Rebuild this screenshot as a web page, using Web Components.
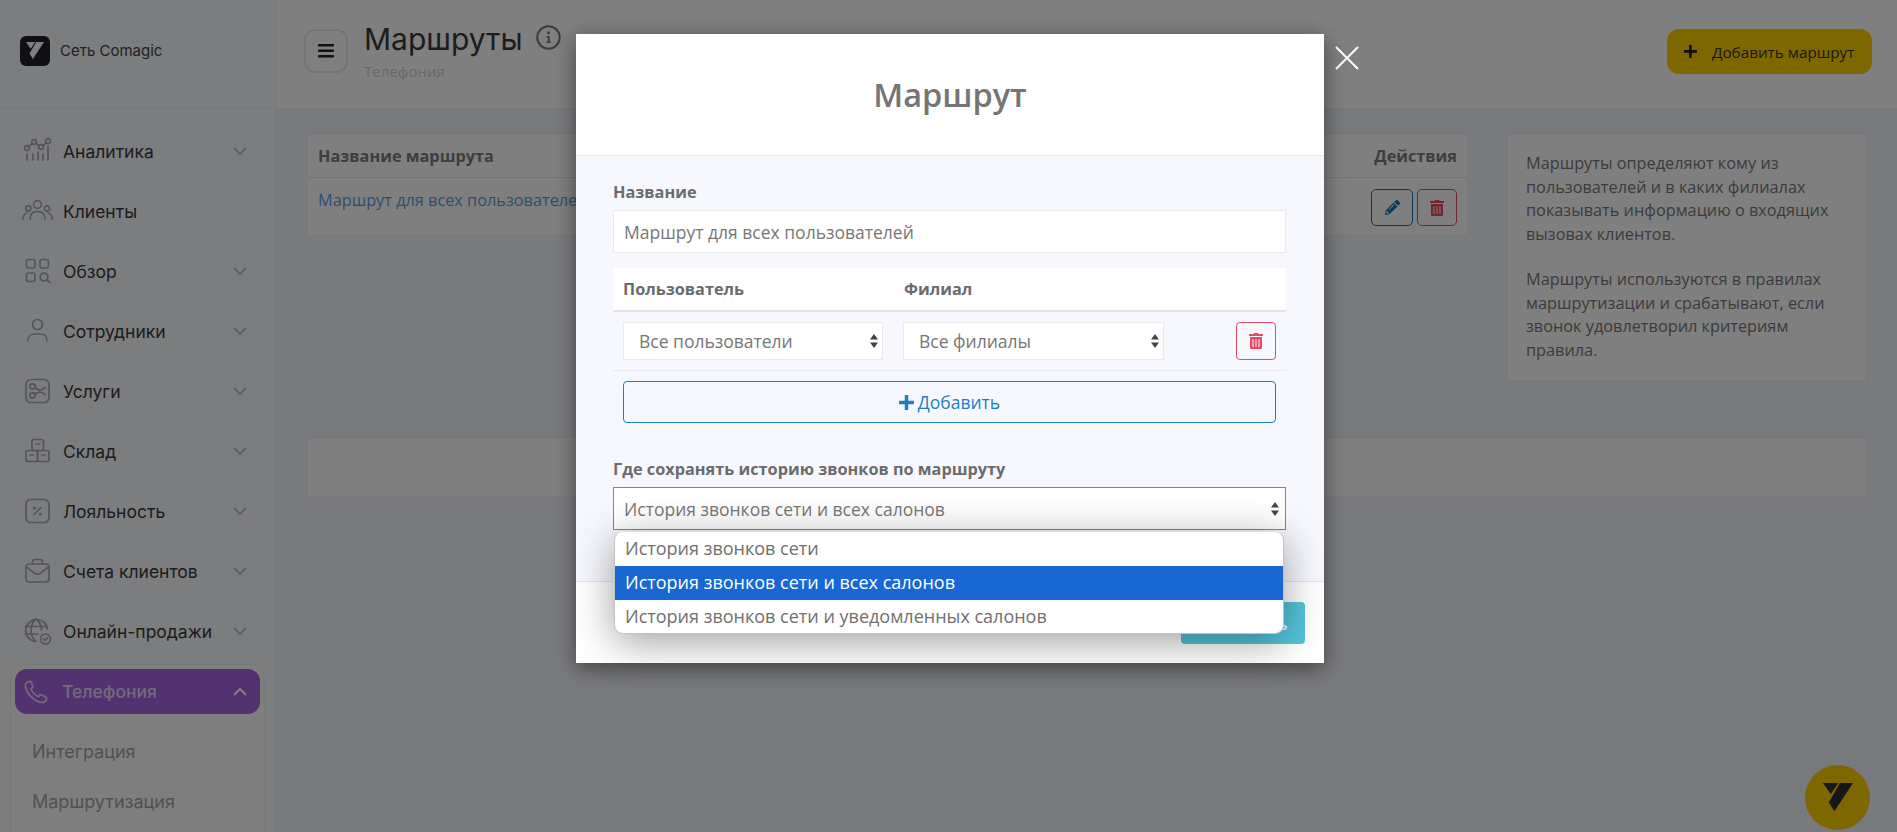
<!DOCTYPE html>
<html lang="ru"><head><meta charset="utf-8"><title>Маршруты</title>
<style>
html,body{margin:0;height:832px;overflow:hidden;background:#f3f5fb}
body{font-family:"Open Sans",sans-serif;color:#666}
</style></head><body>
<app-shell></app-shell>
<script>
const T={
 trash:c=>`<svg width="14" height="16" viewBox="0 0 448 512" fill="${c}"><path d="M32 464a48 48 0 0 0 48 48h288a48 48 0 0 0 48-48V128H32zm272-256a16 16 0 0 1 32 0v224a16 16 0 0 1-32 0zm-96 0a16 16 0 0 1 32 0v224a16 16 0 0 1-32 0zm-96 0a16 16 0 0 1 32 0v224a16 16 0 0 1-32 0zM432 32H312l-9.4-18.7A24 24 0 0 0 281.1 0H166.8a23.72 23.72 0 0 0-21.4 13.3L136 32H16A16 16 0 0 0 0 48v32a16 16 0 0 0 16 16h416a16 16 0 0 0 16-16V48a16 16 0 0 0-16-16z"/></svg>`,
 pencil:c=>`<svg width="15" height="15" viewBox="0 0 512 512" fill="${c}"><path d="M497.9 142.1l-46.1 46.1c-4.7 4.7-12.3 4.7-17 0l-111-111c-4.7-4.7-4.7-12.3 0-17l46.1-46.1c18.7-18.7 49.1-18.7 67.9 0l60.1 60.1c18.8 18.7 18.8 49.1 0 67.9zM284.2 99.8L21.6 362.4.4 483.9c-2.9 16.4 11.4 30.6 27.8 27.8l121.5-21.3 262.6-262.6c4.7-4.7 4.7-12.3 0-17l-111-111c-4.8-4.7-12.4-4.7-17.1 0zM124.1 339.9c-5.5-5.5-5.5-14.3 0-19.8l154-154c5.5-5.5 14.3-5.5 19.8 0s5.5 14.3 0 19.8l-154 154c-5.5 5.5-14.3 5.5-19.8 0zM88 424h48v36.3l-64.5 11.3-31.1-31.1L51.7 376H88v48z"/></svg>`,
 logo:(w,c)=>`<svg width="${w}" viewBox="0 0 92 87" fill="${c}" style="display:block"><path d="M0 0H47L24 34ZM92 0 35 87 18 59 52 0Z"/></svg>`
};
const NAV={
 a:`<circle cx="6" cy="12" r="2.4"/><circle cx="13" cy="6" r="2.4"/><circle cx="20" cy="11" r="2.4"/><circle cx="27" cy="5" r="2.4"/><path d="M7.800 10.500 11.200 7.500M15 7 18 9.800M22 9.700 25.200 6.500M6 18V24M12 18V24M17 16V24M22 18V24M27 10V24"/>`,
 c:`<circle cx="16.500" cy="8.500" r="3.800"/><circle cx="7.300" cy="12.500" r="2.600"/><circle cx="26" cy="12.500" r="2.600"/><path d="M9 23C9 18 12 15.500 16.500 15.500S24 18 24 23M2 23C2 19.500 3.500 17.500 6 17M31 23C31 19.500 29.500 17.500 27 17"/>`,
 o:`<rect x="5.500" y="3.500" width="8.500" height="8.500" rx="2.200"/><rect x="19" y="3.500" width="8.500" height="8.500" rx="2.200"/><rect x="5.500" y="17" width="8.500" height="8.500" rx="2.200"/><circle cx="23" cy="21" r="3.900"/><path d="M26 24 29 26.500"/>`,
 e:`<circle cx="16.500" cy="8.500" r="5"/><path d="M7 24.500C7 20 10 18 13 18H20C23 18 26 20 26 24.500"/>`,
 s:`<rect x="5" y="3.500" width="23" height="23" rx="5"/><circle cx="11.500" cy="10.500" r="2.600"/><circle cx="11.500" cy="19.500" r="2.600"/><path d="M14 11.500 24 18.500M14 18.500 24 11.500"/>`,
 w:`<rect x="11" y="3.500" width="11.500" height="11" rx="2"/><rect x="5" y="14.500" width="11.500" height="11" rx="2"/><rect x="16.500" y="14.500" width="11.500" height="11" rx="2"/><path d="M15 8H18.500M9 19H12.500M20.500 19H24"/>`,
 l:`<rect x="5" y="3.500" width="23" height="23" rx="5"/><path d="M20 11.500 13 18.500"/><circle cx="13.500" cy="12" r=".7"/><circle cx="19.500" cy="18" r=".7"/>`,
 b:`<rect x="5" y="8" width="23" height="18" rx="3"/><path d="M11.500 8V6C11.500 4.500 12.500 3.500 14 3.500H19C20.500 3.500 21.500 4.500 21.500 6V8M5.500 11 14 17.500C15.500 18.500 17.500 18.500 19 17.500L27.500 11"/>`,
 g:`<path d="M15 25.500A11 11 0 1 1 26.500 13M4.500 10.500H25.500M4.500 18H17M15 3C11 6 10 10.500 10 14.500S11.500 22.500 15 25.500M15 3C19 6 20.500 10.500 20.500 14"/><circle cx="24.500" cy="23" r="5"/><path d="M22.500 23 24 24.500 26.500 21.800"/>`,
 p:`<path d="M9 4.500C6.500 5 5 7 5.500 9.500 7 17 13 23.500 21 25.500 23.500 26 25.500 24.500 26.500 22.500 27 21.500 26.500 20.500 25.500 20L22 18C21 17.500 20 17.800 19.300 18.700L18.500 19.700C15 18 12.500 15.500 11 12L12 11C12.800 10.300 13 9.300 12.600 8.300L11.200 5.300C10.800 4.500 10 4.300 9 4.500Z"/>`
};
function def(name,html){customElements.define(name,class extends HTMLElement{
  constructor(){super();this.attachShadow({mode:'open'})}
  connectedCallback(){this.shadowRoot.innerHTML=typeof html==='function'?html(this):html}
})}

def('nav-item',h=>{const act=h.hasAttribute('active'),ch=h.hasAttribute('nochev')?'':`<svg class="chev" width="14" height="8" viewBox="0 0 14 8" fill="none" stroke="${act?'#fff':'#aeb0b5'}" stroke-width="${act?2:1.600}"><path d="M1 ${act?7:1} 7 ${act?1:7} 13 ${act?7:1}"/></svg>`;
 return `<style>
 :host{display:flex;flex:none;align-items:center;height:${act?'45px':'60px'};font:17.500px Inter,sans-serif;color:#38383c;padding-left:${act?'5px':'21px'};${act?'background:#a465de;border-radius:12px;color:#fff;':''}}
 .ic{width:30px;height:30px;flex:none;overflow:visible;fill:none;stroke:${act?'#fff':'#a8aaae'};stroke-width:1.700;stroke-linecap:round;stroke-linejoin:round;opacity:${act?'.75':'1'}}
 span{margin-left:12px;white-space:nowrap;${act?'opacity:.72;font-weight:500;':''}}
 .chev{margin-left:auto;margin-right:${act?'13px':'28px'};flex:none}
 </style><svg class="ic" viewBox="0 0 30 30">${NAV[h.getAttribute('icon')]}</svg><span><slot></slot></span>${ch}`});

def('sub-item',`<style>:host{display:flex;flex:none;align-items:center;height:50px;padding-left:17px;font:18px Inter,sans-serif;color:#a2a3a9}</style><slot></slot>`);

def('side-bar',`<style>
 :host{display:flex;flex-direction:column;width:275px;flex:none;height:832px;background:#f9fbff;border-right:1px solid #f0f0f2;overflow:hidden;box-sizing:content-box}
 .brand{height:108px;flex:none;border-bottom:1px solid #f0f1f4;display:flex;align-items:center;padding:0 0 6px 20px;gap:10px;font:15px Inter,sans-serif;color:#444;box-sizing:border-box}
 .brand div{width:30px;height:30px;border-radius:6px;background:#1c2026;display:flex;align-items:center;justify-content:center}
 nav{padding-top:13px;display:flex;flex-direction:column}
 .open{margin:3px 10px 0;padding:4px 4px 0;border:1px solid #f0f1f4;border-radius:14px;background:#fdfdfe;display:flex;flex-direction:column;box-sizing:border-box;height:200px}
 .subs{padding-top:12px;display:flex;flex-direction:column}
 </style>
 <div class="brand"><div>${T.logo(18,'#fff')}</div>Сеть Comagic</div>
 <nav>
  <nav-item icon="a">Аналитика</nav-item>
  <nav-item icon="c" nochev>Клиенты</nav-item>
  <nav-item icon="o">Обзор</nav-item>
  <nav-item icon="e">Сотрудники</nav-item>
  <nav-item icon="s">Услуги</nav-item>
  <nav-item icon="w">Склад</nav-item>
  <nav-item icon="l">Лояльность</nav-item>
  <nav-item icon="b">Счета клиентов</nav-item>
  <nav-item icon="g">Онлайн-продажи</nav-item>
  <div class="open">
   <nav-item icon="p" active>Телефония</nav-item>
   <div class="subs"><sub-item>Интеграция</sub-item><sub-item>Маршрутизация</sub-item></div>
  </div>
 </nav>`);

def('page-header',`<style>
 :host{display:flex;align-items:flex-start;height:109px;flex:none;background:#fff;border-bottom:1px solid #f0f1f4;padding:29px 25px 0 28px;box-sizing:border-box}
 .menu{width:44px;height:44px;box-sizing:border-box;border:2px solid #e8e9ee;border-radius:11px;display:flex;align-items:center;justify-content:center;flex:none}
 .t{margin-left:16px}
 h1{margin:-10px 0 0;font:400 30px/40px Inter,sans-serif;color:#38383c;display:flex;align-items:center}
 h1 svg{margin:-4px 0 0 13px}
 small{display:block;font:15px/16px "Open Sans",sans-serif;color:#cfd0d4;margin-top:4px}
 .add{margin-left:auto;width:205px;height:45px;border-radius:12px;background:#ffce00;display:flex;align-items:center;padding-left:17px;box-sizing:border-box;font:15.250px "Open Sans",sans-serif;color:#333;gap:15px}
 </style>
 <div class="menu"><svg width="16" height="14" viewBox="0 0 16 14" fill="#222"><rect width="16" height="2.600" rx=".8"/><rect y="5.500" width="16" height="2.600" rx=".8"/><rect y="11" width="16" height="2.600" rx=".8"/></svg></div>
 <div class="t"><h1>Маршруты<svg width="25" height="25" viewBox="0 0 25 25"><circle cx="12.500" cy="12.500" r="11.200" fill="none" stroke="#777" stroke-width="2"/><circle cx="12.500" cy="7.800" r="1.500" fill="#777"/><path d="M10.500 11H13.700V16.500H15V18H10.500V16.500H11.800V12.500H10.500Z" fill="#777"/></svg></h1><small>Телефония</small></div>
 <div class="add"><svg width="13" height="13" viewBox="0 0 13 13" fill="#222"><rect y="5" width="13" height="2.800"/><rect x="5" width="2.800" height="13"/></svg><span>Добавить маршрут</span></div>`);

def('action-btn',h=>`<style>:host{display:flex;align-items:center;justify-content:center;box-sizing:border-box;height:37px;width:${h.getAttribute('w')}px;border:1px solid ${h.getAttribute('c')};border-radius:5px}</style>${h.getAttribute('i')==='pencil'?T.pencil(h.getAttribute('c')):T.trash(h.getAttribute('c'))}`);

def('routes-table',`<style>
 :host{display:block;background:#fff;border:1px solid #eeeff2;box-sizing:border-box;height:103px;font-size:16.300px}
 .h{height:43px;display:flex;align-items:center;justify-content:space-between;padding:0 10px;border-bottom:1px solid #e6e7ea;font-weight:700;color:#7c7c7c}
 .r{display:flex;justify-content:space-between;padding:11px 10px 0;color:#5a9ce6}
 .b{display:flex;gap:4px}
 a{line-height:24px;margin-top:-1px}
 </style>
 <div class="h"><span>Название маршрута</span><span>Действия</span></div>
 <div class="r"><a>Маршрут для всех пользователей</a><div class="b"><action-btn w="42" c="#1272b8" i="pencil"></action-btn><action-btn w="40" c="#e84a5f" i="trash"></action-btn></div></div>`);

def('info-card',`<style>
 :host{display:block;background:#fff;border:1px solid #f0f1f4;box-sizing:border-box;height:248px;padding:18px 18px 0;font-size:16.300px;line-height:23.500px;color:#777}
 p{margin:0}p+p{margin-top:22px}
 </style><p>Маршруты определяют кому из пользователей и в каких филиалах показывать информацию о входящих вызовах клиентов.</p><p>Маршруты используются в правилах маршрутизации и срабатывают, если звонок удовлетворил критериям правила.</p>`);

def('page-content',`<style>
 :host{display:grid;grid-template-columns:1161px 360px;column-gap:39px;padding:24px 30px 0 31px;align-items:start;flex:1;grid-template-rows:248px auto;align-content:start;background:#f3f5fb}
 .wide{grid-column:1/3;height:61px;background:#fff;border:1px solid #f0f1f4;border-radius:3px;margin-top:56px;box-sizing:border-box}
 </style><routes-table></routes-table><info-card></info-card><div class="wide"></div>`);

def('fake-select',h=>`<style>
 :host{display:flex;align-items:center;box-sizing:border-box;background:#fff;border:1px solid ${h.hasAttribute('focus')?'#2fae94':'#e9eaee'};height:${h.getAttribute('h')||38}px;padding-left:${h.getAttribute('p')||12}px;padding-right:${h.getAttribute('r')||4}px;font-size:17.500px;color:#777;white-space:nowrap}
 svg{margin-left:auto}
 </style><span><slot></slot></span><svg width="8" height="14" viewBox="0 0 8 14" fill="#444"><path d="M4 0 8 5.500H0ZM4 14 0 8.500H8Z"/></svg>`);

def('select-menu',`<style>
 :host{position:absolute;left:38px;top:497px;width:670px;height:103px;background:#fff;border:1px solid #c4c4c4;border-top-color:#ddd;border-radius:9px;overflow:hidden;box-sizing:border-box;box-shadow:0 8px 40px rgba(0,0,0,.38);font-size:18px;color:#707070;z-index:3}
 div{height:34px;line-height:33px;padding-left:10px;white-space:nowrap}
 .s{background:#1967d2;color:#fff}
 </style><div>История звонков сети</div><div class="s">История звонков сети и всех салонов</div><div>История звонков сети и уведомленных салонов</div>`);

def('route-modal',`<style>
 :host{position:absolute;left:576px;top:34px;width:748px;height:629px;background:#fff;box-shadow:0 5px 20px rgba(0,0,0,.45);display:flex;flex-direction:column;font-family:"Open Sans",sans-serif}
 header{height:122px;flex:none;box-sizing:border-box;border-bottom:1px solid #e5e7ec;display:flex;align-items:center;justify-content:center;font-size:32.500px;font-weight:600;color:#757575}
 main{height:426px;flex:none;box-sizing:border-box;background:#f7f8fd;padding:26px 38px 0 37px;border-bottom:1px solid #e5e7ec}
 label{display:block;font-size:16.300px;font-weight:700;line-height:20px;color:#6b6b6b}
 .inp{margin-top:8px;height:43px;box-sizing:border-box;background:#fff;border:1px solid #e9eaee;font-size:17.500px;line-height:42px;padding-left:10px;color:#777}
 .th{margin-top:15px;height:44px;box-sizing:border-box;background:#fff;border-bottom:2px solid #e2e3e9;display:grid;grid-template-columns:281px 1fr;padding-left:10px;font-size:16.300px;font-weight:700;line-height:42px;color:#6b6b6b}
 .tr{height:59px;box-sizing:border-box;border-bottom:1px solid #e8e9ee;display:grid;grid-template-columns:260px 261px 40px;column-gap:20px;padding:10px 10px 0;align-content:start}
 .tr .x{height:38px;box-sizing:border-box;margin-left:52px;width:40px;border:1px solid #e84a5f;border-radius:4px;display:flex;align-items:center;justify-content:center}
 .add{margin:10px 10px 0;height:42px;box-sizing:border-box;border:1px solid #1b7fc4;border-radius:4px;display:flex;align-items:center;justify-content:center;gap:4px;color:#1b7fc4;font-size:17.500px}
 .l2{margin-top:36px}
 .sel{margin-top:8px}
 footer{flex:1;position:relative}
 .save{position:absolute;left:605px;top:20px;width:124px;height:42px;border-radius:4px;background:#56c5dc;color:#fff;font-size:17px;display:flex;align-items:center;justify-content:center}
 </style>
 <header>Маршрут</header>
 <main>
  <label>Название</label>
  <div class="inp">Маршрут для всех пользователей</div>
  <div class="th"><span>Пользователь</span><span>Филиал</span></div>
  <div class="tr"><fake-select p="15" r="4">Все пользователи</fake-select><fake-select p="15" r="4">Все филиалы</fake-select><div class="x">${T.trash('#e84a5f')}</div></div>
  <div class="add"><svg width="15" height="15" viewBox="0 0 15 15" fill="#1b7fc4"><rect y="5.800" width="15" height="3.400" rx=".6"/><rect x="5.800" width="3.400" height="15" rx=".6"/></svg>Добавить</div>
  <label class="l2">Где сохранять историю звонков по маршруту</label>
  <fake-select class="sel" focus h="43" p="10" r="6">История звонков сети и всех салонов</fake-select>
 </main>
 <footer><div class="save">Сохранить</div></footer>
 <select-menu></select-menu>`);

def('app-shell',`<style>
 :host{display:flex;width:1897px;height:832px;position:relative;overflow:hidden}
 .col{flex:1;display:flex;flex-direction:column;min-width:0}
 .overlay{position:absolute;inset:0;background:rgba(0,0,0,.5)}
 .fab{position:absolute;left:1805px;top:765px;width:65px;height:65px;border-radius:50%;background:#7f6700;display:flex;align-items:center;justify-content:center}
 .close{position:absolute;left:1335px;top:46px}
 </style>
 <side-bar></side-bar>
 <div class="col"><page-header></page-header><page-content></page-content></div>
 <div class="overlay"></div>
 <div class="fab">${T.logo(30,'#14181d')}</div>
 <svg class="close" width="24" height="24" viewBox="0 0 24 24" stroke="#fff" stroke-width="2" fill="none"><path d="M1 1 23 23M23 1 1 23"/></svg>
 <route-modal></route-modal>`);
</script>
</body></html>
